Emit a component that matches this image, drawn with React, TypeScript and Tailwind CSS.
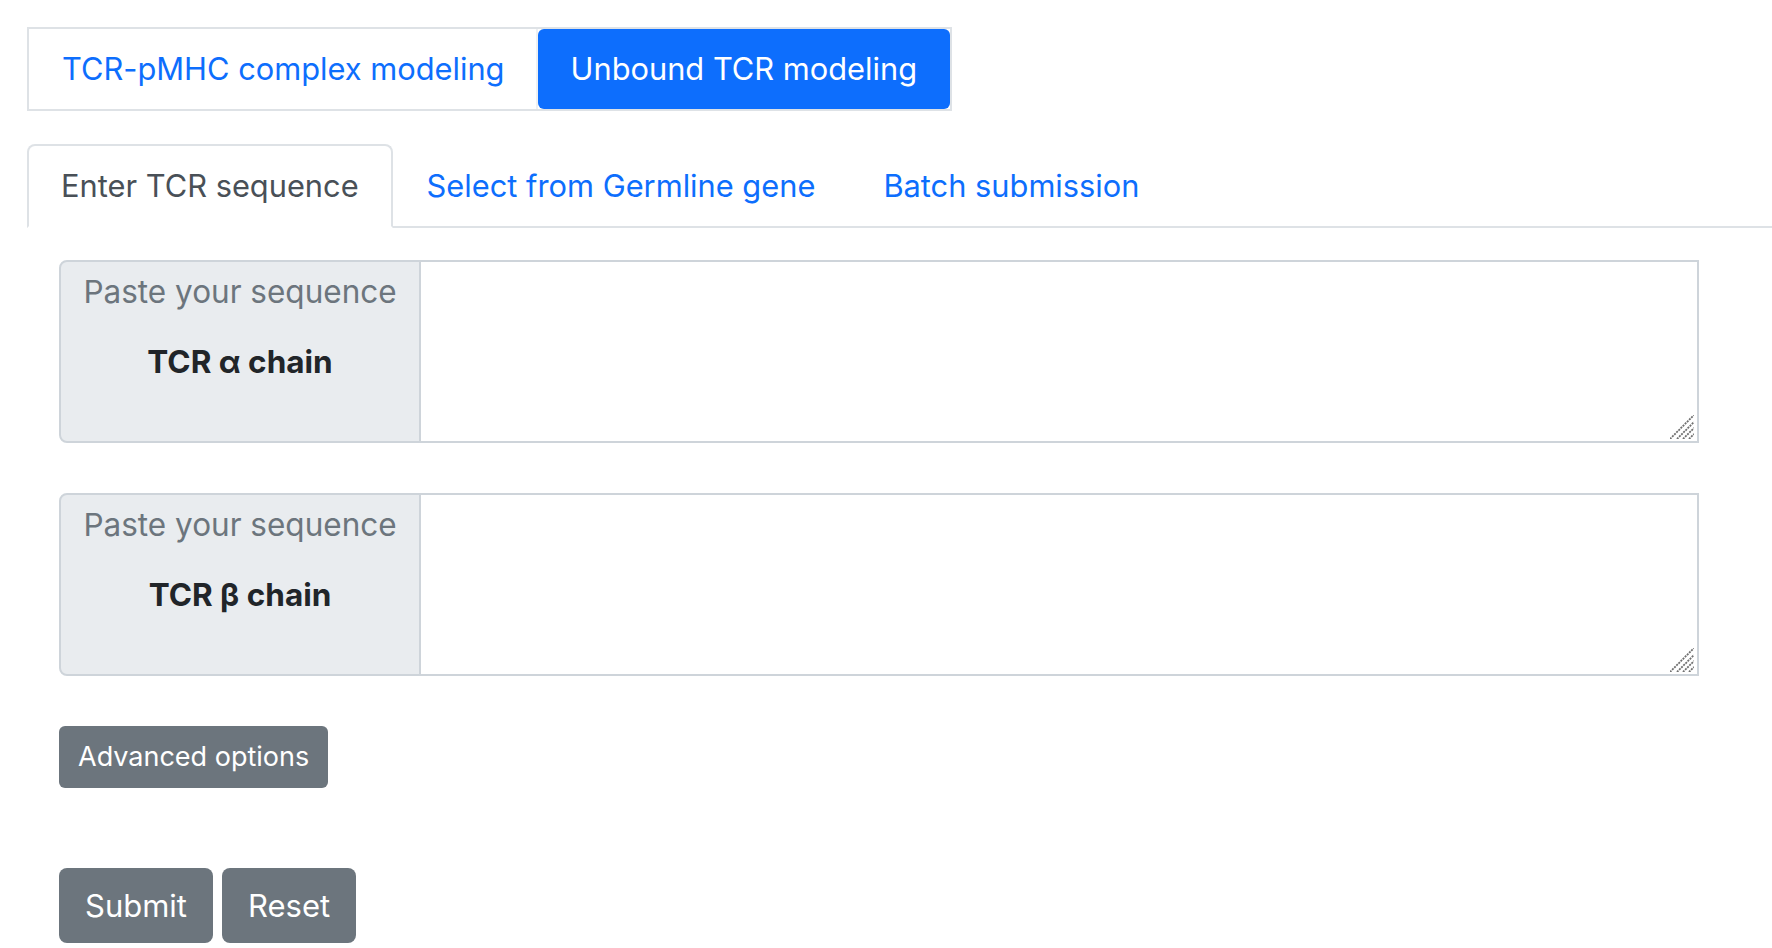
import React, { useState } from 'react';

type Mode = 'complex' | 'unbound';
type Tab = 'enter' | 'germline' | 'batch';

const font = { fontFamily: 'Inter, "Liberation Sans", Arial, sans-serif' };

// Retina-like resize grip drawn over the textarea corner
const ResizeGrip: React.FC = () => (
  <svg className="absolute right-[5px] bottom-[4px] pointer-events-none" width="24" height="24" viewBox="0 0 24 24">
    <g stroke="#707070" strokeWidth="1.8" strokeDasharray="2 1">
      <line x1="0" y1="24" x2="24" y2="0" />
      <line x1="7" y1="24" x2="24" y2="7" />
      <line x1="13" y1="24" x2="24" y2="13" />
      <line x1="19" y1="24" x2="24" y2="19" />
    </g>
  </svg>
);

const SequenceField: React.FC<{ chain: string }> = ({ chain }) => (
  <div className="flex w-[1640px] h-[183px]">
    {/* Label addon */}
    <div className="w-[362px] shrink-0 flex flex-col items-center bg-[#e9ecef] border-2 border-[#ced4da] rounded-l-[8px] pt-[6px]">
      <span className="text-[31.5px] leading-[48px] text-[#6c757d]">Paste your sequence</span>
      <span className="mt-[22px] text-[31.5px] leading-[48px] font-bold text-[#212529]">{chain}</span>
    </div>
    <div className="relative flex-1 flex">
      <textarea className="flex-1 resize-none border-2 border-l-0 border-[#ced4da] bg-white outline-none p-3 text-[31px]" />
      <ResizeGrip />
    </div>
  </div>
);

const App: React.FC = () => {
  const [mode, setMode] = useState<Mode>('unbound');
  const [tab, setTab] = useState<Tab>('enter');

  const tabs: { id: Tab; label: string }[] = [
    { id: 'enter', label: 'Enter TCR sequence' },
    { id: 'germline', label: 'Select from Germline gene' },
    { id: 'batch', label: 'Batch submission' },
  ];

  return (
    <div className="min-h-screen bg-white pl-[27px] pt-[27px]" style={font}>
      {/* Modeling mode switch */}
      <div className="inline-flex border-2 border-[#dee2e6]">
        <button
          onClick={() => setMode('complex')}
          className={`pl-[33px] pr-[31px] py-[16px] text-[30.8px] leading-[48px] border-r-2 border-[#eef0f2] ${
            mode === 'complex' ? 'bg-[#0d6efd] text-white rounded-[6px]' : 'text-[#0d6efd]'
          }`}
        >
          TCR-pMHC complex modeling
        </button>
        <button
          onClick={() => setMode('unbound')}
          className={`px-[33px] py-[16px] text-[30.8px] leading-[48px] ${
            mode === 'unbound' ? 'bg-[#0d6efd] text-white rounded-[6px]' : 'text-[#0d6efd]'
          }`}
        >
          Unbound TCR modeling
        </button>
      </div>

      {/* Input tabs */}
      <div className="mt-[33px] flex border-b-2 border-[#dee2e6]">
        {tabs.map((t) => (
          <button
            key={t.id}
            onClick={() => setTab(t.id)}
            className={`-mb-[2px] px-[32px] py-[16px] text-[30.8px] leading-[48px] border-2 rounded-t-[8px] ${
              tab === t.id
                ? 'border-[#dee2e6] border-b-white bg-white text-[#495057]'
                : 'border-transparent text-[#0d6efd]'
            }`}
          >
            {t.label}
          </button>
        ))}
      </div>

      <div className="pl-[32px] pt-[32px]">
        <SequenceField chain="TCR α chain" />
        <div className="mt-[50px]">
          <SequenceField chain="TCR β chain" />
        </div>

        <button className="mt-[50px] h-[62px] px-[19px] bg-[#6c757d] text-white text-[27px] leading-[40px] rounded-[6px]">
          Advanced options
        </button>

        <div className="mt-[80px] flex gap-[9px]">
          <button className="h-[75px] px-[26px] bg-[#6c757d] text-white text-[31px] leading-[48px] rounded-[8px]">
            Submit
          </button>
          <button className="h-[75px] px-[26px] bg-[#6c757d] text-white text-[31px] leading-[48px] rounded-[8px]">
            Reset
          </button>
        </div>
      </div>
    </div>
  );
};

export default App;
